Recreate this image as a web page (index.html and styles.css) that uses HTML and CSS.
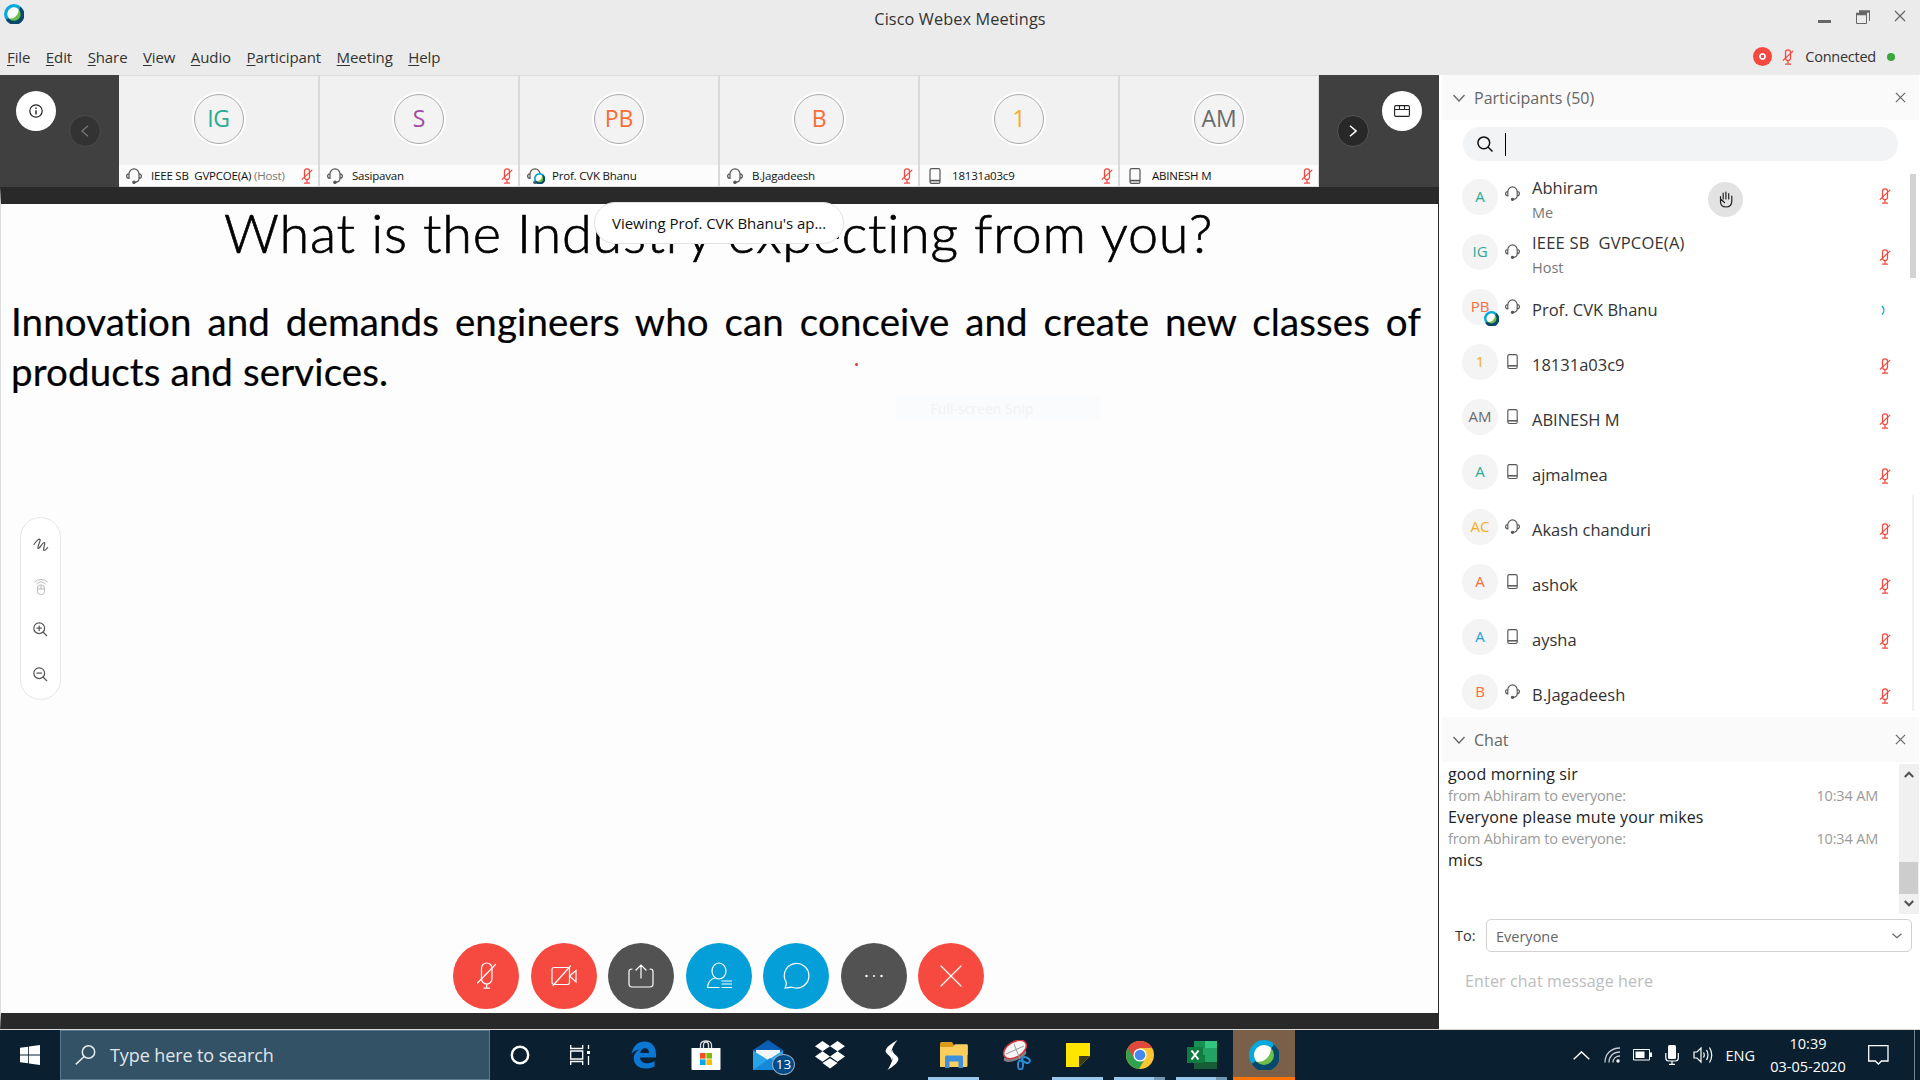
FILE: index.html
```html
<!DOCTYPE html>
<html lang="en">
<head>
<meta charset="utf-8">
<title>Cisco Webex Meetings</title>
<link rel="stylesheet" href="styles.css">
</head>
<body>
<svg class="defs" aria-hidden="true">
  <symbol id="webex" viewBox="0 0 24 24">
    <circle cx="12" cy="12" r="12" fill="#04a9df"/>
    <path d="M19.5 3.2A12 12 0 1 1 2.2 19C5 17 19 9 19.500 3.200Z" fill="#06496b"/>
    <circle cx="12" cy="12" r="8" fill="#6cc04a"/>
    <path d="M17.500 6.200C18 12 13 18.500 6 17.300A8 8 0 0 1 17.500 6.200Z" fill="#fff"/>
  </symbol>
  <symbol id="headset" viewBox="0 0 16 16">
    <g fill="none" stroke="currentColor" stroke-width="1.200">
      <path d="M3 9.500V6.100a5 5.200 0 0 1 10 0v3.400M3 5.800C1.300 6 .6 6.900.6 8.100S1.300 10.500 3 10.500zM13 5.800c1.700.2 2.400 1.100 2.400 2.300s-.7 2.400-2.400 2.400zM13 10.500c0 2.200-1.300 3.500-4 3.800"/>
      <circle cx="8" cy="14.200" r="1.200" fill="currentColor"/>
    </g>
  </symbol>
  <symbol id="phone" viewBox="0 0 16 16">
    <g fill="none" stroke="currentColor" stroke-width="1.200">
      <rect x="3" y=".6" width="10" height="14.800" rx="1.600"/><path d="M3 12.600h10" stroke-width="1.600"/>
    </g>
  </symbol>
  <symbol id="micoff" viewBox="0 0 12 16">
    <g fill="none" stroke="currentColor" stroke-width="1.250">
      <rect x="3.500" y=".8" width="5" height="10.700" rx="2.500"/><path d="M6 11.500v3.600M3 15.200h6M.8 11.600 11.200 1.900"/>
    </g>
  </symbol>
  <symbol id="cross" viewBox="0 0 12 12"><path d="M1 1l10 10M11 1L1 11" fill="none" stroke="currentColor" stroke-width="1.300"/></symbol>
  <symbol id="down" viewBox="0 0 12 8"><path d="M.5 1L6 7l5.500-6" fill="none" stroke="currentColor" stroke-width="1.300"/></symbol>
</svg>

<header class="titlebar">
  <div class="caption">
    <svg class="logo" preserveAspectRatio="none" viewBox="0 0 24 24"><use href="#webex"/></svg>
    <h1 class="title">Cisco Webex Meetings</h1>
    <div class="winbtns">
      <svg width="14" height="14"><path d="M0 12.500h13" stroke="#666" stroke-width="3"/></svg>
      <svg width="14" height="14" fill="none" stroke="#666"><path d="M.5 4.500h10v9H.5z"/><path d="M0 4h11M3 1.500h11" stroke-width="2.500"/><path d="M13.500 1v10"/></svg>
      <svg class="c12"><use href="#cross"/></svg>
    </div>
  </div>
  <div class="menurow">
    <nav class="menu"><span><u>F</u>ile</span><span><u>E</u>dit</span><span><u>S</u>hare</span><span><u>V</u>iew</span><span><u>A</u>udio</span><span><u>P</u>articipant</span><span><u>M</u>eeting</span><span><u>H</u>elp</span></nav>
    <div class="status">
      <i class="rec"></i>
      <svg class="mic red"><use href="#micoff"/></svg>
      <span>Connected</span>
      <i class="online"></i>
    </div>
  </div>
</header>

<main class="main">
  <section class="stage">
    <div class="strip">
      <div class="edge left">
        <span class="round"><svg width="14" height="14" fill="none" stroke="#222" stroke-width="1.200"><circle cx="7" cy="7" r="6.200"/><path d="M7 6.200v4.200M7 3.500v1.400" stroke-width="1.400"/></svg></span>
        <span class="nav dim"><svg width="8" height="12" fill="none" stroke="#777" stroke-width="1.300"><path d="M7 .8 1 6l6 5.200"/></svg></span>
      </div>
      <div class="tile head"><div class="pic"><b class="teal">IG</b></div><div class="name"><svg class="dev"><use href="#headset"/></svg><span>IEEE SB&nbsp; GVPCOE(A) <em>(Host)</em></span><svg class="mic red"><use href="#micoff"/></svg></div></div>
      <div class="tile"><div class="pic"><b class="purple">S</b></div><div class="name"><svg class="dev"><use href="#headset"/></svg><span>Sasipavan</span><svg class="mic red"><use href="#micoff"/></svg></div></div>
      <div class="tile"><div class="pic"><b class="orange">PB</b></div><div class="name"><svg class="dev"><use href="#headset"/></svg><svg class="ball small"><use href="#webex"/></svg><span>Prof. CVK Bhanu</span></div></div>
      <div class="tile"><div class="pic"><b class="orange">B</b></div><div class="name"><svg class="dev"><use href="#headset"/></svg><span>B.Jagadeesh</span><svg class="mic red"><use href="#micoff"/></svg></div></div>
      <div class="tile"><div class="pic"><b class="amber">1</b></div><div class="name"><svg class="dev"><use href="#phone"/></svg><span>18131a03c9</span><svg class="mic red"><use href="#micoff"/></svg></div></div>
      <div class="tile last"><div class="pic"><b class="grey">AM</b></div><div class="name"><svg class="dev"><use href="#phone"/></svg><span>ABINESH M</span><svg class="mic red"><use href="#micoff"/></svg></div></div>
      <div class="edge right">
        <span class="nav"><svg width="8" height="12" fill="none" stroke="#fff" stroke-width="1.500"><path d="M1 .8 7 6l-6 5.200"/></svg></span>
        <span class="round"><svg width="16" height="12" fill="none" stroke="#222" stroke-width="1.100"><rect x=".6" y=".6" width="14.800" height="10.800" rx="1.300"/><path d="M.6 4.500h14.800M5.500.6v3.900M10.500.6v3.900"/></svg></span>
      </div>
    </div>
    <div class="share">
      <div class="slide">
        <h2 class="s-title">What is the Industry expecting from you?</h2>
        <p class="s-body first">Innovation and demands engineers who can conceive and create new classes of</p>
        <p class="s-body second">products and services.</p>
      </div>
      <i class="pointer"></i>
      <div class="ghost">Full-screen Snip</div>
      <div class="viewing">Viewing Prof. CVK Bhanu's ap...</div>
      <div class="tools">
        <svg width="16" height="14" fill="none" stroke="#555" stroke-width="1.200" stroke-linecap="round" stroke-linejoin="round"><path d="M1 6.500C3 3.500 5.500 1 6.900 1.200c1.500.5-2.900 7.500-1.900 9C6.500 11.500 9.500 4 11.500 4.500c1.200.6-1.500 5.500-.8 7.500.9 1 2.500-.5 4-2.500"/></svg>
        <svg width="14" height="16" fill="none" stroke="#bbb"><rect x="3.500" y="6" width="7" height="9.500" rx="3"/><path d="M3.500 10h7M7 6v4M2.500 5a6 6 0 0 1 9 0M.5 3.200a9 9 0 0 1 13 0"/></svg>
        <svg width="15" height="15" fill="none" stroke="#555" stroke-width="1.200"><circle cx="6.200" cy="6.200" r="5.400"/><path d="M10 10l4 4M3.500 6.200h5.400M6.200 3.500v5.400"/></svg>
        <svg width="15" height="15" fill="none" stroke="#555" stroke-width="1.200"><circle cx="6.200" cy="6.200" r="5.400"/><path d="M10 10l4 4M3.500 6.200h5.400"/></svg>
      </div>
      <div class="controls">
        <span class="btn cr"><svg viewBox="0 0 28 28"><rect x="9.500" y="1" width="10.500" height="21" rx="5.250"/><path d="M14.700 22v4M12 26.200h5.500M5.500 21 23.500 2.500"/></svg></span>
        <span class="btn cr"><svg viewBox="0 0 28 28"><rect x="2" y="5.500" width="17.500" height="17" rx="2"/><path d="M19.500 14l6.500-5.500v11.500zM3 23.500 20.500 4"/></svg></span>
        <span class="btn cg"><svg viewBox="0 0 28 28"><path d="M5 7c-1.500 0-3 .5-3 2.300v12.500C2 24 3 25 5 25h18c2 0 3-1 3-3.200V9.300C26 7.500 24.500 7 23 7M14 16V3M9 8l5-5 5 5"/></svg></span>
        <span class="btn cb"><svg viewBox="0 0 28 28"><ellipse cx="14" cy="9" rx="7" ry="8"/><path d="M10 16c-4.500 1-7 4-7.500 9.500H14M17 19h9.500M17 22h9.500M17 25.500h9.500"/></svg></span>
        <span class="btn cb"><svg viewBox="0 0 28 28"><path d="M3 26c1.200-2.300 1.500-4 1.200-5.700A12.300 12.300 0 1 1 11 25.500C8.500 24.500 6 26 3 26z"/></svg></span>
        <span class="btn cg"><svg viewBox="0 0 28 28"><g fill="#fff" stroke="none"><circle cx="6.500" cy="14" r="1.200"/><circle cx="14" cy="14" r="1"/><circle cx="21.500" cy="14" r="1.200"/></g></svg></span>
        <span class="btn cr"><svg viewBox="0 0 28 28"><path d="M4 4l20 20M24 4 4 24"/></svg></span>
      </div>
    </div>
  </section>

  <aside class="panel">
    <div class="phead"><svg class="chev"><use href="#down"/></svg><h3>Participants (50)</h3><svg class="px"><use href="#cross"/></svg></div>
    <div class="search"><svg width="16" height="16" fill="none" stroke="#111" stroke-width="1.500"><circle cx="6.800" cy="6.800" r="5.900"/><path d="M11 11l4.500 4.500"/></svg><i class="caret"></i></div>
    <ul class="people">
      <li class="two me"><b class="teal">A</b><svg class="dev"><use href="#headset"/></svg><p>Abhiram<small>Me</small></p><span class="hand"><svg width="14" height="17" viewBox="0 0 14 17" fill="none" stroke="#222" stroke-width="1.200" stroke-linecap="round"><path d="M1.500 10.500V5.500M1.500 10.500c0 3.500 2 5.500 5.500 5.500 4 0 5.800-2.500 5.800-6V5M4.200 8V2.200M6.900 8V1M9.700 8V2.500M1.500 8l4 3.500"/></svg></span><svg class="mic red"><use href="#micoff"/></svg></li>
      <li class="two low"><b class="teal">IG</b><svg class="dev"><use href="#headset"/></svg><p>IEEE SB&nbsp; GVPCOE(A)<small>Host</small></p><svg class="mic red"><use href="#micoff"/></svg></li>
      <li><b class="orange">PB</b><svg class="ball"><use href="#webex"/></svg><svg class="dev"><use href="#headset"/></svg><p>Prof. CVK Bhanu</p><svg class="mic talk" viewBox="0 0 12 16"><path d="M3 4c2.500 2.500 2.500 6 0 8.500" fill="none" stroke="#049fd9" stroke-width="1.300"/></svg></li>
      <li><b class="amber">1</b><svg class="dev"><use href="#phone"/></svg><p>18131a03c9</p><svg class="mic red"><use href="#micoff"/></svg></li>
      <li><b class="grey">AM</b><svg class="dev"><use href="#phone"/></svg><p>ABINESH M</p><svg class="mic red"><use href="#micoff"/></svg></li>
      <li><b class="teal">A</b><svg class="dev"><use href="#phone"/></svg><p>ajmalmea</p><svg class="mic red"><use href="#micoff"/></svg></li>
      <li><b class="amber">AC</b><svg class="dev"><use href="#headset"/></svg><p>Akash chanduri</p><svg class="mic red"><use href="#micoff"/></svg></li>
      <li><b class="orange">A</b><svg class="dev"><use href="#phone"/></svg><p>ashok</p><svg class="mic red"><use href="#micoff"/></svg></li>
      <li><b class="blue">A</b><svg class="dev"><use href="#phone"/></svg><p>aysha</p><svg class="mic red"><use href="#micoff"/></svg></li>
      <li><b class="orange">B</b><svg class="dev"><use href="#headset"/></svg><p>B.Jagadeesh</p><svg class="mic red"><use href="#micoff"/></svg></li>
    </ul>
    <i class="thumb"></i><i class="rail"></i>
    <div class="phead chathead"><svg class="chev"><use href="#down"/></svg><h3>Chat</h3><svg class="px"><use href="#cross"/></svg></div>
    <div class="chat">
      <div class="log">
        <p>good morning sir</p>
        <div class="from"><span>from Abhiram to everyone:</span><span>10:34 AM</span></div>
        <p>Everyone please mute your mikes</p>
        <div class="from"><span>from Abhiram to everyone:</span><span>10:34 AM</span></div>
        <p>mics</p>
      </div>
      <div class="sbar">
        <svg width="10" height="7" fill="none" stroke="#505050" stroke-width="2"><path d="M.8 6 5 1.700 9.200 6"/></svg>
        <i></i>
        <svg width="10" height="7" fill="none" stroke="#505050" stroke-width="2"><path d="M.8 1 5 5.300 9.200 1"/></svg>
      </div>
    </div>
    <div class="to"><label>To:</label><div class="select">Everyone<svg width="10" height="6" fill="none" stroke="#666" stroke-width="1.200"><path d="M.5.8 5 4.800 9.500.8"/></svg></div></div>
    <div class="entry">Enter chat message here</div>
  </aside>
</main>

<footer class="taskbar">
  <div class="start"><svg width="20" height="20" fill="#fff"><path d="M0 2.800 8.200 1.700v7.900H0zM9 1.500 20 0v9.600H9zM0 10.400h8.200v7.900L0 17.200zM9 10.400h11V20L9 18.500z"/></svg></div>
  <div class="tsearch"><svg width="21" height="20" fill="none" stroke="#e5ebef" stroke-width="1.500"><circle cx="13.500" cy="7" r="6.200"/><path d="M9.200 11.500.8 19.400"/></svg><span>Type here to search</span></div>
  <div class="apps">
    <span class="app"><svg width="20" height="20"><circle cx="10" cy="10" r="8.200" fill="none" stroke="#fff" stroke-width="2.400"/></svg></span>
    <span class="app"><svg width="20" height="20" fill="none" stroke="#fff" stroke-width="1.300"><path d="M.7 0v3.500h12V0M.7 20v-3.500h12V20M.7 6h12v8H.7zM18.500 0v4M18.500 11v9"/><path d="M17 7.500h3" stroke-width="3"/></svg></span>
    <span class="app"><svg width="26" height="28" viewBox="0 0 26 28"><path d="M.5 13C2 5 7 .5 13.500.5 21 .5 25 6 25 13v3.500H9c.3 4 3.200 5.800 7.200 5.800 2.800 0 5.200-.8 7.400-2.200V25.500c-2.500 1.300-5.200 2-8.600 2C7 27.500 2.700 22.500 2.700 17.500c0-4 2.300-7.300 5.900-9C4.700 8.900 2.300 10.300.5 13zM9.300 12h8.700c0-3-1.200-4.800-4.100-4.800-2.500 0-4.100 1.800-4.600 4.800z" fill="#0b78d4"/></svg></span>
    <span class="app"><svg width="30" height="30"><path d="M9.500 8V5c0-5.500 11-5.500 11 0v3M12.500 8V5c0-4 5-4 5 0v3" fill="none" stroke="#ddd" stroke-width="1.300"/><path d="M.5 8h29v21q0 1-1 1H1.500q-1 0-1-1z" fill="#fff"/><path d="M9 13h5.600v5.600H9z" fill="#f25022"/><path d="M15.400 13H21v5.600h-5.600z" fill="#7fba00"/><path d="M9 19.400h5.600V25H9z" fill="#00a4ef"/><path d="M15.400 19.400H21V25h-5.600z" fill="#ffb900"/></svg></span>
    <span class="app"><svg width="30" height="30"><path d="M0 10 15 0l15 10v20H0z" fill="#0a5fb4"/><path d="M3 10h24v10H3z" fill="#f3f6f8"/><path d="M0 10.500 15 20 30 10.500V30H0z" fill="#28a4e8"/><path d="M0 30 17 18l13 12z" fill="#1787d8"/></svg><i class="badge">13</i></span>
    <span class="app"><svg width="30" height="28" viewBox="0 0 30 26" preserveAspectRatio="none" fill="#fff"><path d="M7.500 0 15 4.800 7.500 9.600 0 4.800zM22.500 0 30 4.800l-7.500 4.800L15 4.800zM7.500 9.600 15 14.400l-7.500 4.800L0 14.400zM22.500 9.600l7.500 4.800-7.500 4.800-7.500-4.800zM7.500 20.500 15 16l7.500 4.500L15 25.500z"/></svg></span>
    <span class="app"><svg width="14" height="30" fill="#fff"><path d="M12.500 0C6 4 1 7 .6 11c-.2 3 5.600 4.500 6.200 9.500C9 16 5.500 13.500 6.500 10.500 7.500 7 9.500 4 12.500 0zM2.500 30c6-4 10.500-7 10.900-11 .2-3-5.600-4.500-6.200-9.500C5 14 8.500 16.500 7.500 19.500 6.500 23 5 26 2.500 30z"/></svg></span>
    <span class="app run"><svg width="28" height="26" viewBox="0 0 28 24" preserveAspectRatio="none"><path d="M0 1.500Q0 0 1.500 0H12l2 3h14v9H0z" fill="#d99a1c"/><path d="M0 4.500h13l2-2.500h12.500v20q0 1-1 1H0z" fill="#fbce5e"/><path d="M5 24V14q0-1.500 1.500-1.500h15Q23 12.500 23 14v10h-4.500v-6h-9v6z" fill="#3c90dc"/></svg></span>
    <span class="app"><svg width="30" height="30"><ellipse cx="14" cy="16" rx="12" ry="4.500" fill="#7b8289" transform="rotate(-20 14 16)"/><ellipse cx="14" cy="9.500" rx="12.500" ry="7.500" fill="#f6f6f6" stroke="#d9363b" stroke-width="1.600" transform="rotate(-32 14 9.500)"/><path d="M5 14 23 6M13 4l6 15" stroke="#999"/><g fill="none" stroke="#2d8bd8" stroke-width="2"><ellipse cx="19.500" cy="25" rx="2.500" ry="4.500"/><ellipse cx="25" cy="20" rx="2.500" ry="4" transform="rotate(-65 25 20)"/></g></svg></span>
    <span class="app run"><svg width="24" height="24"><path d="M0 0h24v13L13 24H0z" fill="#ffe600"/><path d="M13 24V13h11z" fill="#3a3a20"/></svg></span>
    <span class="app run multi"><svg width="28" height="28" viewBox="0 0 28 28"><circle cx="14" cy="14" r="14" fill="#fbc62f"/><path d="M14 14 1.900 7A14 14 0 0 0 13 28l6.500-11z" fill="#2fa24f"/><path d="M1.900 7A14 14 0 0 1 26.200 7H14L8 17.500z" fill="#e0483c"/><circle cx="14" cy="14" r="6.600" fill="#fff"/><circle cx="14" cy="14" r="5.300" fill="#4688f1"/></svg></span>
    <span class="app run multi"><svg width="30" height="28"><path d="M7 0h23v28H7z" fill="#21a366"/><path d="M7 0h11v7H7z" fill="#169154"/><path d="M18 0h12v7H18z" fill="#33c481"/><path d="M7 14h11v7H7z" fill="#107c41"/><path d="M7 21h23v7H7z" fill="#185c37"/><path d="M0 6h16v16H0z" fill="#107c41"/><path d="M4.500 9.500l7 9M11.500 9.500l-7 9" stroke="#fff" stroke-width="2"/></svg></span>
    <span class="app active"><svg width="30" height="30"><use href="#webex"/></svg></span>
  </div>
  <div class="tray">
    <svg class="t1" width="17" height="9" fill="none" stroke="#fff" stroke-width="1.400"><path d="M.7 8.300 8.500.9l7.800 7.400"/></svg>
    <svg class="t2" width="17" height="16" fill="none" stroke="#c5ccd2" stroke-width="1.300"><path d="M1 15.500C1 7 7 1 16 1M5 15.500C5 9.500 9 5 16 5M9 15.500c0-4 3-6.500 7-6.500"/><circle cx="14" cy="14" r="1.700" fill="#fff" stroke="none"/></svg>
    <svg class="t3" width="19" height="12" fill="none" stroke="#fff"><path d="M.5.5h16v10.500H.5z"/><path d="M2.500 2.500h9V9h-9z" fill="#fff" stroke="none"/><path d="M18 3.500v4.500" stroke-width="2"/></svg>
    <svg class="t4" width="14" height="20" fill="none" stroke="#fff" stroke-width="1.200"><rect x="3" y="0" width="8" height="14" rx="1.500" fill="#fff" stroke="none"/><path d="M.8 8v5q0 3 3 3h6.500q3 0 3-3V8M7 16v3M4 19.300h6"/></svg>
    <svg class="t5" width="21" height="18" fill="none" stroke="#fff" stroke-width="1.200"><path d="M1 6h3l4-4v14l-4-4H1z"/><path d="M10.500 6.500q1.500 2.500 0 5M13.500 4q3 5 0 10M16.500 1.500q4.500 7.500 0 15"/></svg>
    <span class="lang">ENG</span>
    <span class="clock">10:39<br>03-05-2020</span>
    <svg class="t6" width="21" height="20" fill="none" stroke="#fff" stroke-width="1.300"><path d="M.7.700h19.300v15.300h-6.500L10.400 19l-3.100-3H.7z"/></svg>
    <i class="peek"></i>
  </div>
</footer>
</body>
</html>
```
FILE: styles.css
```css
* { box-sizing: border-box; }
body, h1, h2, h3, p, ul { margin: 0; padding: 0; }
body {
  width: 1920px; height: 1080px; overflow: hidden; background: #fff;
  font-family: "Open Sans", "Noto Sans", sans-serif; font-size: 15px; color: #333;
  display: flex; flex-direction: column; white-space: nowrap;
}
h1, h2, h3, b, em, i { font-weight: 400; font-style: normal; }
svg { display: block; flex: none; }
.defs { position: absolute; width: 0; height: 0; }

.red { color: #f6483e; }
.teal { color: #2aab92; }
.purple { color: #a04ba5; }
.orange { color: #f96c38; }
.amber { color: #f9ac20; }
.grey { color: #6a6b6c; }
.blue { color: #1c9fdb; }
.mic { width: 12px; height: 16px; }
.dev { width: 16px; height: 16px; color: #555; }

/* window title and menus */
.titlebar { height: 75px; background: #ebebeb; display: flex; flex-direction: column; }
.caption { height: 38px; display: flex; align-items: flex-start; justify-content: space-between; padding: 4px 14px 0 4px; }
.logo { width: 20px; height: 20px; margin-right: 78px; }
.title { font-size: 16.300px; line-height: 30px; letter-spacing: .1px; }
.winbtns { display: flex; gap: 24px; padding-top: 6px; color: #666; }
.winbtns svg:nth-child(1) { margin-top: -1px; }
.c12 { width: 12px; height: 12px; }
.menurow { flex: 1; display: flex; justify-content: space-between; align-items: center; padding: 0 25px 0 7px; }
.menu { display: flex; gap: 15.500px; font-size: 15px; letter-spacing: -.1px; }
.menu u { text-underline-offset: 2px; text-decoration-thickness: 1px; }
.status { display: flex; align-items: center; font-size: 14.500px; letter-spacing: -.25px; }
.rec { width: 19px; height: 19px; border-radius: 50%; background: radial-gradient(circle, #f6483e 1.500px, #fff 2px 3px, #f6483e 3.700px); margin-right: 10px; }
.status .mic { margin-right: 11px; }
.online { width: 8px; height: 8px; border-radius: 50%; background: #3aa83c; margin-left: 11px; }

.main { height: 955px; display: flex; }
.stage { width: 1439px; display: flex; flex-direction: column; }

/* film strip */
.strip { height: 112px; display: flex; }
.edge { background: #404040; display: flex; padding-top: 16px; }
.left { width: 119px; padding-left: 16px; gap: 13px; }
.right { width: 120px; padding-left: 18px; gap: 13px; }
.round { width: 40px; height: 40px; border-radius: 50%; background: #fff; display: grid; place-items: center; }
.nav { width: 32px; height: 32px; margin-top: 24px; border-radius: 50%; background: #282828; border: 1px solid #555; display: grid; place-items: center; }
.dim { background: #333; border-color: #4c4c4c; }
.tile { width: 200px; display: flex; flex-direction: column; border-top: 1px solid #dcdcdc; border-right: 2px solid #dadada; border-bottom: 1px solid #ddd; }
.tile.head { width: 201px; }
.tile.last { width: 199px; border-right-width: 1px; }
.pic { height: 89px; background: #f1f1f1; display: flex; align-items: center; justify-content: center; }
.pic b { width: 50px; height: 50px; margin: -3px 0 0 0; border-radius: 50%; border: 1px solid #aaa; box-shadow: 0 0 0 2px #fff; background: #f3f3f3; font: 23px/47px "Open Sans", "Noto Sans", sans-serif; text-align: center; letter-spacing: -.2px; }
.name { flex: 1; position: relative; background: #fcfcfc; display: flex; align-items: center; padding: 0 5px 0 7px; font-size: 11.500px; letter-spacing: -.2px; color: #111; }
.name .dev { margin-right: 9px; }
.name span { margin-right: auto; }
.name em { color: #777; }
.ball { position: absolute; width: 15px; height: 15px; left: 44px; top: 236px; }
.ball.small { width: 11px; height: 11px; left: 14px; top: 8px; }

/* shared content */
.share { flex: 1; position: relative; background: #fdfdfd; border: solid #292929; border-width: 17px 1px 17px 0; border-left: 1px solid #ddd; }
.slide { padding: 0 17px 0 10px; color: #000; font-family: Lato, "Open Sans", sans-serif; }
.s-title { margin-top: -3px; font-size: 54px; line-height: 64px; font-weight: 300; padding-left: 213px; -webkit-text-stroke: .7px #000; letter-spacing: .75px; }
.s-body { font-size: 38.500px; line-height: 50px; letter-spacing: .12px; -webkit-text-stroke: .2px #000; }
.first { margin-top: 31px; text-align-last: justify; }
.pointer { position: absolute; left: 854px; top: 159px; width: 3px; height: 3px; border-radius: 50%; background: #e33; }
.ghost { position: absolute; left: 895px; top: 192px; width: 204px; height: 24px; background: #fafbfd; color: #f2f2f4; font-size: 14px; line-height: 25px; text-align: center; padding-right: 32px; }
.viewing { position: absolute; left: 593px; top: -2px; width: 250px; height: 42px; border-radius: 21px; background: #fff; border: 1px solid #e2e2e2; font-size: 15px; line-height: 40px; padding-left: 17px; color: #111; letter-spacing: -.05px; }
.tools { position: absolute; left: 19px; top: 313px; width: 41px; height: 183px; border: 1px solid #e6e6e6; border-radius: 21px; background: #fff; display: flex; flex-direction: column; align-items: center; gap: 27px; padding-top: 20px; }
.tools svg:last-child { margin-top: 3px; }
.controls { position: absolute; left: 452px; top: 739px; display: flex; gap: 11.500px; }
.btn { width: 66px; height: 66px; border-radius: 50%; display: grid; place-items: center; }
.btn svg { width: 28px; height: 28px; fill: none; stroke: #fff; stroke-width: 1.200; stroke-linecap: round; }
.cr { background: #f6493f; }
.cg { background: #525252; }
.cb { background: #049fd9; }

/* side panel */
.panel { position: relative; width: 481px; padding: 0 1px 0 3px; background: #fff; display: flex; flex-direction: column; }
.phead { height: 45px; background: #fafafa; display: flex; align-items: center; padding: 0 13px 0 11px; color: #666; }
.phead h3 { font-size: 16px; margin: 0 auto 0 9px; }
.chev { width: 12px; height: 8px; }
.px { width: 11px; height: 11px; }
.search { margin: 7px 21px 0 21px; height: 34px; border-radius: 17px; background: #f2f3f5; display: flex; align-items: center; padding-left: 14px; gap: 12px; }
.caret { width: 1px; height: 23px; background: #000; }
.people { list-style: none; padding: 8px 28px 0 20px; height: 556px; }
.people li { position: relative; height: 55px; display: flex; align-items: flex-start; padding-top: 10px; font-size: 16.500px; line-height: 24px; }
.people b { width: 36px; height: 36px; border-radius: 50%; background: #f4f4f4; text-align: center; font-size: 15px; line-height: 35px; margin-right: 7px; }
.people .dev { margin-top: 10px; width: 15px; height: 15px; }
.people .me .dev { margin-top: 7px; }
.people p { margin: 9px auto 0 12px; }
.people .low p { letter-spacing: .2px; }
.people small { display: block; font-size: 14.500px; line-height: 25px; color: #777; letter-spacing: 0; }
.people .mic { margin-top: 14px; }
.people .talk { margin-top: 13px; }
.people .two p { margin-top: -3px; }
.people .me .mic { margin-top: 9px; }
.people .low .mic { margin-top: 15px; }
.hand { width: 35px; height: 35px; border-radius: 50%; background: #e2e2e2; display: grid; place-items: center; margin: 3px 136px 0 0; }
.people .ball { left: 22px; top: 32px; }
.thumb { position: absolute; left: 471px; top: 99px; width: 6px; height: 104px; background: #d3d3d3; }
.rail { position: absolute; left: 473px; top: 420px; width: 2px; height: 216px; background: #f1f1f1; }
.chat { height: 152px; display: flex; }
.log { flex: 1; padding: 1px 21px 0 6px; }
.log p { font-size: 16px; line-height: 22px; color: #222; letter-spacing: .15px; }
.from { display: flex; justify-content: space-between; font-size: 14.500px; line-height: 21px; color: #9a9a9a; letter-spacing: -.18px; }
.sbar { width: 20px; margin-top: 2px; background: #f0f0f0; display: flex; flex-direction: column; align-items: center; padding: 7px 1px 7px 0; }
.sbar i { width: 19px; height: 32px; background: #cdcdcd; margin: auto 0 6px; }
.to { display: flex; align-items: center; padding: 5px 7px 0 13px; font-size: 14.500px; }
.select { margin-left: auto; width: 426px; height: 33px; border: 1px solid #d2d2d2; border-radius: 5px; display: flex; align-items: center; justify-content: space-between; padding: 1px 9px 0 9px; color: #666; }
.entry { padding: 17px 0 0 23px; font-size: 16px; line-height: 24px; color: #bcbcbc; letter-spacing: .16px; }

/* taskbar */
.taskbar { height: 50px; background: #0a1f30; display: flex; color: #fff; box-shadow: 0 -1px #d8d8d8; position: relative; }
.start { width: 60px; display: grid; place-items: center; }
.tsearch { width: 430px; background: #345266; border: 1px solid #5b7a8f; display: flex; align-items: center; gap: 14px; padding-left: 14px; font-size: 18px; letter-spacing: -.1px; color: #e0e6ea; }
.apps { display: flex; }
.app { position: relative; width: 62px; display: grid; place-items: center; }
.app:first-child { width: 60px; }
.app:nth-child(2) { width: 60px; }
.app:nth-child(3) { margin-left: 3px; }
.run::after { content: ""; position: absolute; left: 5px; bottom: 0; width: 51px; height: 3px; background: #99c8ee; }
.multi::after { background: linear-gradient(90deg, #99c8ee 40px, #7397b3 40px); }
.active { background: #7b6049; }
.active::after { content: ""; position: absolute; left: 0; right: 0; bottom: 0; height: 3px; background: #ff7300; }
.badge { position: absolute; left: 35px; top: 24px; width: 23px; height: 21px; border: 1px solid #8aa7bf; border-radius: 50%; background: #004b88; font-size: 13.500px; line-height: 19px; text-align: center; }
.tray { margin-left: auto; display: flex; align-items: center; font-size: 14.500px; }
.t1 { margin-right: 14px; }
.t2 { margin-right: 12px; }
.t3 { margin-right: 13px; }
.t4 { margin-right: 14px; }
.t5 { margin-right: 11px; }
.clock { width: 84px; margin: 0 18px 0 11px; text-align: center; line-height: 23px; }
.t6 { margin-right: 25px; }
.peek { width: 1px; height: 50px; background: #76858f; margin-right: 5px; }
```
